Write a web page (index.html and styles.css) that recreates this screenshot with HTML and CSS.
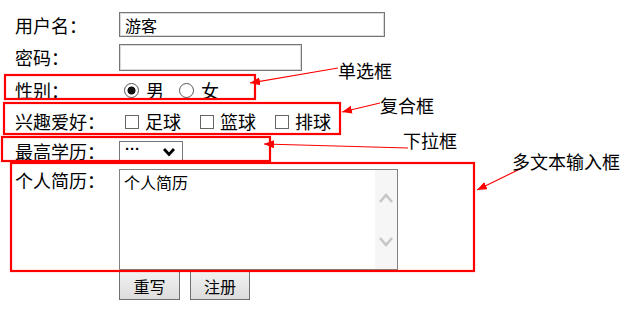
FILE: index.html
```html
<!DOCTYPE html>
<html lang="zh">
<head>
<meta charset="utf-8">
<title>注册</title>
<link rel="stylesheet" href="styles.css">
</head>
<body>
<div class="page">
  <form class="form">
    <div class="row r1">
      <span class="lbl">用户名：</span>
      <input class="text t-user" type="text" value="游客">
    </div>
    <div class="row r2">
      <span class="lbl">密码：</span>
      <input class="text t-pass" type="password">
    </div>
    <div class="row r3">
      <span class="lbl">性别：</span>
      <label class="opt radio-opt"><input type="radio" name="sex" checked>男</label>
      <label class="opt radio-opt"><input type="radio" name="sex">女</label>
    </div>
    <div class="row r4">
      <span class="lbl">兴趣爱好：</span>
      <label class="opt check-opt"><input type="checkbox">足球</label>
      <label class="opt check-opt"><input type="checkbox">篮球</label>
      <label class="opt check-opt"><input type="checkbox">排球</label>
    </div>
    <div class="row r5">
      <span class="lbl">最高学历：</span>
      <div class="select">
        <select><option>···</option></select>
        <svg class="chev" width="12" height="10" viewBox="0 0 12 10"><path d="M1 2 L6 7.5 L11 2" fill="none" stroke="#000" stroke-width="2.8"/></svg>
      </div>
    </div>
    <div class="row r6">
      <span class="lbl">个人简历：</span>
      <div class="area">
        <textarea>个人简历</textarea>
        <div class="sbar">
          <svg width="16" height="12" viewBox="0 0 16 12"><path d="M2 10 L8 3 L14 10" fill="none" stroke="#c6c6c6" stroke-width="2.6"/></svg>
          <svg width="16" height="12" viewBox="0 0 16 12"><path d="M2 2 L8 9 L14 2" fill="none" stroke="#c6c6c6" stroke-width="2.6"/></svg>
        </div>
      </div>
    </div>
    <div class="row r7">
      <button type="reset" class="btn">重写</button>
      <button type="submit" class="btn">注册</button>
    </div>
  </form>

  <svg class="notes" width="621" height="316" viewBox="0 0 621 316">
    <defs>
      <marker id="ah" markerUnits="userSpaceOnUse" markerWidth="11" markerHeight="9" refX="10" refY="4" orient="auto">
        <path d="M0 0 L10 4 L0 8 Z" fill="#f00"/>
      </marker>
    </defs>
    <g fill="none" stroke="#f00" stroke-width="2.2">
      <rect x="5" y="75" width="250" height="24"/>
      <rect x="4" y="103" width="336" height="31"/>
      <rect x="2" y="137" width="268" height="24"/>
      <rect x="11" y="163" width="463" height="108"/>
    </g>
    <g stroke="#f00" stroke-width="1.2">
      <line x1="338" y1="68" x2="250" y2="83" marker-end="url(#ah)"/>
      <line x1="380" y1="103" x2="342" y2="112" marker-end="url(#ah)"/>
      <line x1="408" y1="148" x2="264" y2="144" marker-end="url(#ah)"/>
      <line x1="522" y1="168" x2="477" y2="190" marker-end="url(#ah)"/>
    </g>
  </svg>
  <span class="note n1">单选框</span>
  <span class="note n2">复合框</span>
  <span class="note n3">下拉框</span>
  <span class="note n4">多文本输入框</span>
</div>
</body>
</html>
```

FILE: styles.css
```css
html, body {
  margin: 0;
  padding: 0;
  background: #fff;
}
body {
  font-family: "Noto Sans CJK SC", "Noto Sans", sans-serif;
  color: #000;
}
.page {
  position: relative;
  width: 621px;
  height: 316px;
  overflow: hidden;
}
.form {
  display: flex;
  flex-direction: column;
  padding: 8px 0 0 15px;
  margin: 0;
}
.row {
  display: flex;
  align-items: center;
  font-size: 18px;
  line-height: 24px;
}
.lbl {
  width: 104px;
  flex: none;
  white-space: nowrap;
}
.r1 { height: 33px; }
.r2 { height: 32px; }
.r3 { height: 33px; }
.r4 { height: 30px; }
.r5 { height: 30px; }
.r6 { height: 105px; align-items: flex-start; }
.r6 .lbl { margin-top: 2px; }
.r7 { padding-left: 104px; height: 30px; align-items: flex-start; gap: 10px; }

.text {
  box-sizing: border-box;
  border: 1px solid #767676;
  box-shadow: inset 0 0 0 1px #d9d9d9;
  padding: 0 5px;
  margin: 0;
  font-family: "Noto Sans CJK SC", sans-serif;
  font-size: 16px;
  color: #000;
  outline: none;
}
.t-user { width: 266px; height: 25px; }
.t-pass { width: 183px; height: 27px; }

.opt {
  display: inline-flex;
  align-items: center;
}
.opt input {
  appearance: none;
  -webkit-appearance: none;
  box-sizing: border-box;
  margin: 0;
  background: #fff;
  flex: none;
}
.radio-opt input {
  width: 15px;
  height: 15px;
  border: 1px solid #555;
  border-radius: 50%;
  margin: 1px 7px 0 5px;
}
.radio-opt + .radio-opt input { margin-left: 15px; }
.radio-opt input:checked {
  background: radial-gradient(circle, #111 0 3.6px, #fff 4.4px);
}
.check-opt input {
  width: 14px;
  height: 14px;
  border: 1px solid #666;
  margin: 1px 6px 0 6px;
}
.check-opt + .check-opt input { margin-left: 19px; }

.select {
  box-sizing: border-box;
  width: 64px;
  height: 20px;
  border: 1px solid #767676;
  display: flex;
  align-items: center;
  justify-content: space-between;
  padding: 0 7px 0 5px;
  background: #fff;
}
.select select {
  appearance: none;
  -webkit-appearance: none;
  border: none;
  background: transparent;
  padding: 0;
  margin: 0;
  font-family: "Liberation Sans", sans-serif;
  font-size: 15px;
  font-weight: bold;
  line-height: 14px;
  height: 16px;
  color: #000;
  outline: none;
  margin-top: -5px;
}
.chev { display: block; margin-top: 1px; }

.area {
  box-sizing: border-box;
  margin-top: 3px;
  width: 279px;
  height: 101px;
  border: 1px solid #828282;
  display: flex;
  background: #fff;
}
.area textarea {
  flex: 1;
  border: none;
  resize: none;
  outline: none;
  padding: 2px 4px;
  margin: 0;
  font-family: "Noto Sans CJK SC", sans-serif;
  font-size: 16px;
  line-height: 20px;
  color: #000;
  overflow: hidden;
}
.sbar {
  width: 22px;
  flex: none;
  background: #f6f6f6;
  display: flex;
  flex-direction: column;
  align-items: center;
  padding-top: 22px;
  gap: 32px;
}
.sbar svg { display: block; }

.btn {
  box-sizing: border-box;
  height: 29px;
  padding: 0;
  margin: 0;
  border: 1px solid #707070;
  background: linear-gradient(#f2f2f2, #dcdcdc);
  font-family: "Noto Sans CJK SC", sans-serif;
  font-size: 16px;
  color: #000;
}
.btn:first-child { width: 61px; }
.btn + .btn { width: 60px; }

.notes {
  position: absolute;
  left: 0;
  top: 0;
  pointer-events: none;
}
.note {
  position: absolute;
  font-size: 18px;
  line-height: 20px;
  white-space: nowrap;
  color: #000;
}
.n1 { left: 338px; top: 60px; }
.n2 { left: 380px; top: 95px; }
.n3 { left: 403px; top: 130px; }
.n4 { left: 512px; top: 151px; }
```
